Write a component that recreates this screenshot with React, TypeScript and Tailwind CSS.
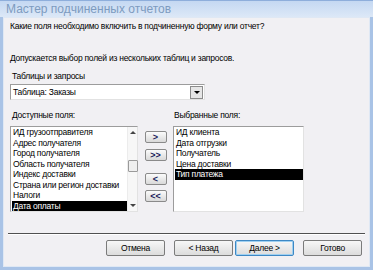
import React from 'react';

const FONT = { fontFamily: '"Liberation Sans", Arial, sans-serif' };

const available = [
  'ИД грузоотправителя',
  'Адрес получателя',
  'Город получателя',
  'Область получателя',
  'Индекс доставки',
  'Страна или регион доставки',
  'Налоги',
  'Дата оплаты',
];

const chosen = ['ИД клиента', 'Дата отгрузки', 'Получатель', 'Цена доставки', 'Тип платежа'];

function ListBox({ items, selected, width, scroll }: { items: string[]; selected: number; width: string; scroll?: boolean }) {
  return (
    <div className={`${width} h-[86px] bg-white border border-[#9c9c9c] border-r-[#e2e2e2] border-b-[#e2e2e2] flex`}>
      <div className="flex-1 pl-[1px] overflow-hidden">
        {items.map((it, i) => (
          <div
            key={it}
            className={`h-[10.5px] leading-[10.5px] pl-[1px] whitespace-nowrap ${
              i === selected ? 'bg-black text-white' : 'text-black'
            }`}
          >
            {it}
          </div>
        ))}
      </div>
      {scroll && (
        <div className="w-[10px] bg-[#f7f7f7] flex flex-col items-center border-l border-[#ececec]">
          <div className="h-[11px] flex items-center justify-center">
            <div className="w-0 h-0 border-x-[3px] border-x-transparent border-b-[3px] border-b-[#444]" />
          </div>
          <div className="mt-[22px] w-[10px] h-[12px] bg-[#efefef] border border-[#9a9a9a] rounded-[1px]" />
          <div className="flex-1" />
          <div className="h-[11px] flex items-center justify-center">
            <div className="w-0 h-0 border-x-[3px] border-x-transparent border-t-[3px] border-t-[#444]" />
          </div>
        </div>
      )}
    </div>
  );
}

function MoveBtn({ label, className }: { label: string; className?: string }) {
  return (
    <div
      className={`w-[22px] h-[12px] flex items-center justify-center rounded-[2px] border border-[#8a8a8a] bg-gradient-to-b from-[#fbfbfb] to-[#d9d9d9] text-[9px] font-bold text-[#1a1a5a] leading-none tracking-normal ${className ?? ''}`}
    >
      {label}
    </div>
  );
}

function Btn({ label, focused }: { label: string; focused?: boolean }) {
  return (
    <div
      className={`w-[59px] h-[16px] flex items-center justify-center rounded-[2px] border bg-gradient-to-b from-[#f7f7f7] to-[#dcdcdc] text-black ${
        focused ? 'border-[#3d88c4] ring-1 ring-inset ring-[#9fd0f1]' : 'border-[#7b7b7b]'
      }`}
    >
      {label}
    </div>
  );
}

export default function App() {
  return (
    <div style={FONT} className="w-[373px] h-[270px] bg-[#a9c3e6] flex flex-col px-[3px] pb-[3px] overflow-hidden">
      <div className="h-[17px] -mx-[3px] px-[6px] bg-gradient-to-b from-[#c4d8f2] to-[#dce8f7] flex items-center border-t border-[#8eaedb]">
        <span className="text-[12px] text-[#7d9bc0] leading-none">Мастер подчиненных отчетов</span>
      </div>
      <div className="flex-1 bg-[#f1f0f3] border border-[#dfe8f4] flex flex-col pl-[6px] pr-[6px] text-black text-[8.5px] tracking-[-0.25px]">
        <div className="mt-[2px] h-[13px] leading-[13px]">Какие поля необходимо включить в подчиненную форму или отчет?</div>
        <div className="mt-[19px] h-[13px] leading-[13px]">Допускается выбор полей из нескольких таблиц и запросов.</div>
        <div className="mt-[5px] h-[13px] leading-[13px] pl-[2px]">Таблицы и запросы</div>
        <div className="mt-[1px] w-[195px] h-[16px] bg-white border border-[#9c9c9c] border-r-[#e2e2e2] border-b-[#e2e2e2] flex items-center">
          <span className="flex-1 pl-[2px]">Таблица: Заказы</span>
          <div className="w-[13px] h-[13px] mr-[1px] bg-[#e6e6e6] border border-[#8c8c8c] flex items-center justify-center">
            <div className="w-0 h-0 border-x-[3px] border-x-transparent border-t-[3px] border-t-black" />
          </div>
        </div>
        <div className="mt-[9px] h-[13px] leading-[13px] pl-[2px] flex">
          <span className="w-[162px]">Доступные поля:</span>
          <span>Выбранные поля:</span>
        </div>
        <div className="mt-[4px] flex">
          <ListBox items={available} selected={7} width="w-[128px]" scroll />
          <div className="w-[35px] flex flex-col items-center pt-[5px]">
            <MoveBtn label=">" />
            <MoveBtn label=">>" className="mt-[6px]" />
            <MoveBtn label="<" className="mt-[12px]" />
            <MoveBtn label="<<" className="mt-[5px]" />
          </div>
          <ListBox items={chosen} selected={4} width="w-[131px]" />
        </div>
        <div className="mt-[21px] mx-[-2px] h-[2px] border-t border-[#505050] border-b border-b-white" />
        <div className="mt-[5px] flex justify-end gap-[9px] pr-[1px]">
          <Btn label="Отмена" />
          <div className="flex gap-[2px]">
            <Btn label="< Назад" />
            <Btn label="Далее >" focused />
          </div>
          <Btn label="Готово" />
        </div>
      </div>
    </div>
  );
}
